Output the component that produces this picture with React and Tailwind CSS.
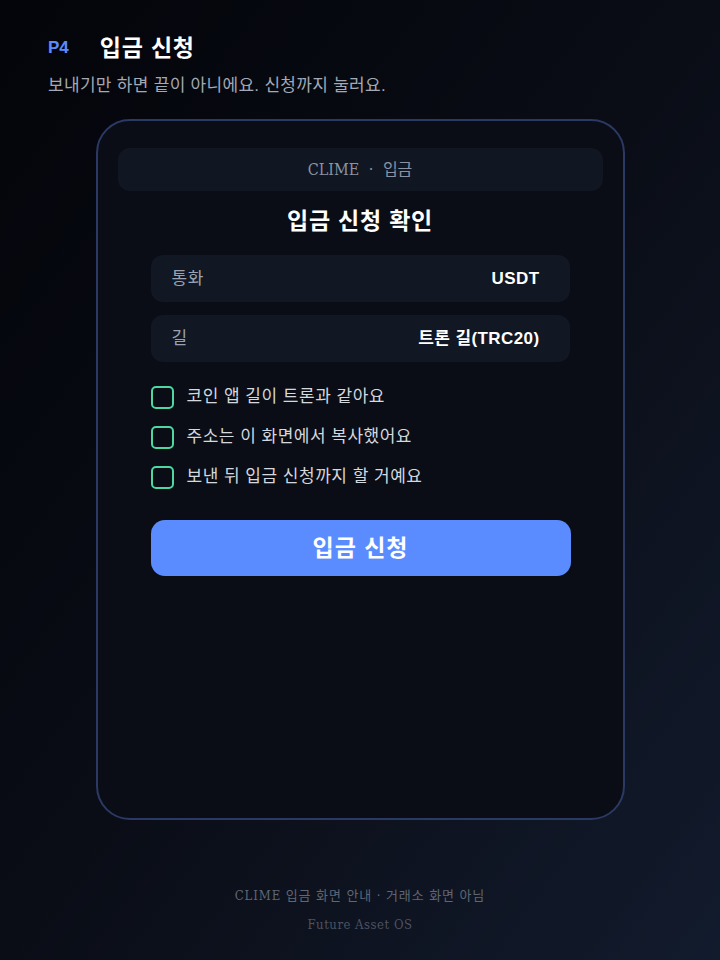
const CHECKS = [
  "코인 앱 길이 트론과 같아요",
  "주소는 이 화면에서 복사했어요",
  "보낸 뒤 입금 신청까지 할 거예요",
];

const ROWS = [
  { label: "통화", val: "USDT" },
  { label: "길", val: "트론 길(TRC20)" },
];

const sans = { fontFamily: '"Liberation Sans", "Noto Sans CJK KR", sans-serif' };
const narrow = { fontFamily: '"DejaVu Serif Condensed", "DejaVu Serif", "Noto Sans CJK KR", serif' };

export default function App() {
  return (
    <div
      className="w-[720px] h-[960px] bg-gradient-to-br from-[#04050a] via-[#0a0d16] to-[#121b2d] text-white flex flex-col"
      style={sans}
    >
      {/* 상단 */}
      <div className="pl-[48px] pt-[33px]">
        <div className="flex items-center gap-[31px] h-[30px]">
          <span className="text-[#5b8cff] font-bold text-[17px]">P4</span>
          <span className="font-bold text-[23px] leading-[30px] tracking-[0.8px]">입금 신청</span>
        </div>
        <p className="mt-[12px] text-[17px] leading-[22px] text-[#a3a9b6] tracking-[0.3px]">보내기만 하면 끝이 아니에요. 신청까지 눌러요.</p>
      </div>

      {/* 카드 */}
      <div className="mt-[22px] mx-auto w-[529px] h-[701px] rounded-[34px] border-2 border-[#2b3965] bg-[#0a0d15] px-[20px] pt-[27px]">
        <div
          className="h-[43px] rounded-[12px] bg-[#111722] flex items-center justify-center text-[16px] text-[#8b93a2] font-stretch-condensed [word-spacing:5px]"
          style={narrow}
        >
          CLIME · 입금
        </div>
        <h2 className="mt-[14px] text-center font-bold text-[23px] leading-[32px] tracking-[0.8px]">입금 신청 확인</h2>

        <div className="mx-[33px] mt-[18px] flex flex-col gap-[13px]">
          {ROWS.map((r) => (
            <div key={r.label} className="h-[47px] rounded-[12px] bg-[#111723] flex items-center justify-between pl-[21px] pr-[30px]">
              <span className="text-[17px] text-[#9aa2b1] tracking-[0.5px]">{r.label}</span>
              <span className="text-[17px] font-bold text-white tracking-[0.4px]">{r.val}</span>
            </div>
          ))}
        </div>

        <div className="mx-[33px] mt-[24px] flex flex-col gap-[18px]">
          {CHECKS.map((c) => (
            <label key={c} className="flex items-center gap-[13px] h-[22px]">
              <span className="w-[23px] h-[23px] rounded-[5px] border-2 border-[#4fd7a0] shrink-0" />
              <span className="text-[17px] leading-[22px] text-[#d4d8df] tracking-[0.5px]">{c}</span>
            </label>
          ))}
        </div>

        <button className="ml-[33px] mt-[32px] w-[420px] h-[56px] rounded-[14px] bg-[#5b8cff] text-white font-bold text-[23px] tracking-[1px]">
          입금 신청
        </button>
      </div>

      {/* 하단 */}
      <div className="mt-[66px] flex flex-col items-center">
        <p className="text-[13px] leading-[20px] text-[#5f6675] tracking-[0.9px] font-stretch-condensed" style={narrow}>
          CLIME 입금 화면 안내 · 거래소 화면 아님
        </p>
        <p className="mt-[11px] text-[13px] leading-[16px] text-[#4b5262] tracking-[0.5px] font-stretch-condensed" style={narrow}>
          Future Asset OS
        </p>
      </div>
    </div>
  );
}
